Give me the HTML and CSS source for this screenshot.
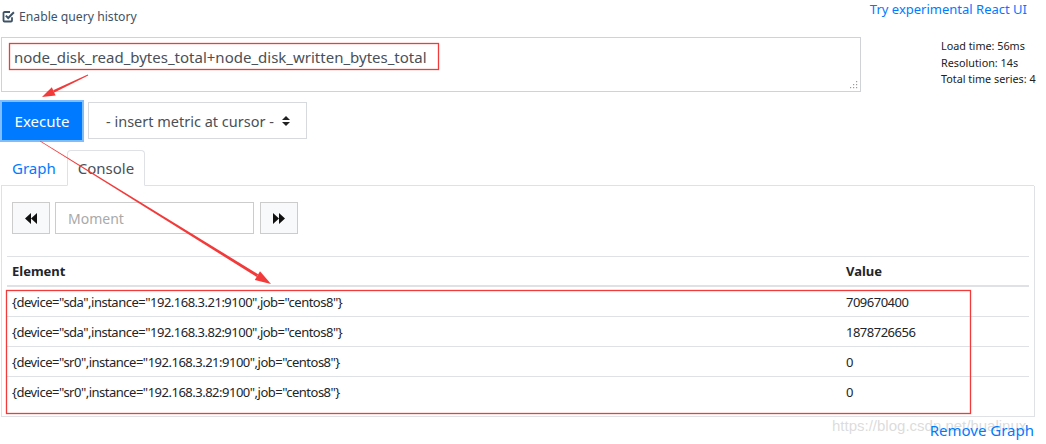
FILE: index.html
```html
<!DOCTYPE html>
<html lang="en">
<head>
  <meta charset="UTF-8">
  <title>Prometheus Time Series Collection and Processing Server</title>
  <link rel="stylesheet" href="styles.css">
</head>
<body>
<div class="page">
  <div class="topbar">
    <label class="history">
      <svg width="13" height="13" viewBox="0 0 13 13"><path d="M10 7.2v3.3a1 1 0 0 1-1 1H2.5a1 1 0 0 1-1-1V3a1 1 0 0 1 1-1H8" fill="none" stroke="#3e5366" stroke-width="1.8"/><path d="M3.8 5.6l2.4 2.4L11.9 2.3" fill="none" stroke="#3e5366" stroke-width="2"/></svg>
      Enable query history
    </label>
    <a class="react-link" href="#">Try experimental React UI</a>
  </div>

  <div class="query-row">
    <div class="expr">
      node_disk_read_bytes_total+node_disk_written_bytes_total
      <svg class="grip" width="8" height="8" viewBox="0 0 8 8" fill="#9a9a9a"><rect x="6" y="0" width="1.2" height="1.2"/><rect x="3" y="3" width="1.2" height="1.2"/><rect x="6" y="3" width="1.2" height="1.2"/><rect x="0" y="6" width="1.2" height="1.2"/><rect x="3" y="6" width="1.2" height="1.2"/><rect x="6" y="6" width="1.2" height="1.2"/></svg>
    </div>
    <div class="stats">
      Load time: 56ms<br>
      Resolution: 14s<br>
      Total time series: 4
    </div>
  </div>

  <div class="exec-row">
    <button class="btn-exec">Execute</button>
    <div class="metric-select">
      - insert metric at cursor -
      <svg width="8" height="12" viewBox="0 0 8 12" fill="#222"><path d="M0 5 L4 1 L8 5Z M0 7 L4 11 L8 7Z"/></svg>
    </div>
  </div>

  <ul class="tabs">
    <li><a href="#">Graph</a></li>
    <li class="active"><a href="#">Console</a></li>
  </ul>

  <div class="panel">
    <div class="time-nav">
      <button class="btn-step"><svg width="12" height="11" viewBox="0 0 12 11" fill="#111"><path d="M0 5.5 L6 0 V11Z M6 5.5 L12 0 V11Z"/></svg></button>
      <input class="moment" type="text" placeholder="Moment">
      <button class="btn-step"><svg width="12" height="11" viewBox="0 0 12 11" fill="#111"><path d="M12 5.5 L6 0 V11Z M6 5.5 L0 0 V11Z"/></svg></button>
    </div>

    <table class="console">
      <thead>
        <tr><th class="col-el">Element</th><th>Value</th></tr>
      </thead>
      <tbody>
        <tr><td>{device="sda",instance="192.168.3.21:9100",job="centos8"}</td><td>709670400</td></tr>
        <tr><td>{device="sda",instance="192.168.3.82:9100",job="centos8"}</td><td>1878726656</td></tr>
        <tr><td>{device="sr0",instance="192.168.3.21:9100",job="centos8"}</td><td>0</td></tr>
        <tr><td>{device="sr0",instance="192.168.3.82:9100",job="centos8"}</td><td>0</td></tr>
      </tbody>
    </table>
  </div>

  <div class="watermark">https://blog.csdn.net/hualinux</div>
  <div class="footer"><a href="#">Remove Graph</a></div>

  <!-- red annotations drawn over the screenshot -->
  <svg class="annot" width="1046" height="444" viewBox="0 0 1046 444">
    <rect x="9.5" y="43.5" width="429" height="26" fill="none" stroke="#f23a3a" stroke-width="1.3"/>
    <rect x="6.5" y="290.5" width="964" height="123" fill="none" stroke="#f23a3a" stroke-width="1.3"/>
    <polygon fill="#f23a3a" points="87.8,74.6 88.2,75.4 54.3,92.6 53.1,90.2"/>
    <polygon fill="#f23a3a" points="42,97 51.8,87.3 55.6,95.5"/>
    <polygon fill="#f23a3a" points="39.8,141.3 40.2,140.7 258.2,274.3 256.6,276.9"/>
    <polygon fill="#f23a3a" points="271,284 254.8,279.9 260,271.3"/>
  </svg>
</div>
</body>
</html>
```

FILE: styles.css
```css
/* General */
body {
  margin: 0;
  font-family: "Noto Sans", "Open Sans", sans-serif;
  color: #212529;
  background: #fff;
}

a {
  color: #007bff;
  text-decoration: none;
}

.page {
  position: relative;
  width: 1046px;
  height: 444px;
  overflow: hidden;
}

/* Top bar */
.topbar {
  display: flex;
  justify-content: space-between;
  align-items: flex-start;
  height: 37px;
}

.history {
  display: flex;
  align-items: center;
  gap: 4px;
  margin: 8px 0 0 2px;
  height: 16px;
  font-size: 12.2px;
  color: #3e5366;
}

.react-link {
  margin-right: 19px;
  font-size: 13px;
  line-height: 18px;
}

/* Expression input */
.query-row {
  display: flex;
  align-items: flex-start;
}

.expr {
  position: relative;
  box-sizing: border-box;
  width: 860px;
  height: 55px;
  margin-left: 1px;
  padding: 7px 12px;
  border: 1px solid #cfd3d7;
  font-size: 15px;
  line-height: 24px;
  color: #495057;
}

.grip {
  position: absolute;
  right: 2px;
  bottom: 2px;
}

.stats {
  margin: 1px 0 0 80px;
  font-size: 10.8px;
  line-height: 16.5px;
  color: #222;
}

/* Execute row */
.exec-row {
  display: flex;
  gap: 6px;
  margin-top: 10px;
  padding-left: 2px;
}

.btn-exec {
  width: 80px;
  height: 38px;
  border: 1px solid #007bff;
  border-radius: 0;
  background: #007bff;
  color: #fff;
  font-family: inherit;
  font-size: 15px;
  box-shadow: 0 0 0 2px #80bdff;
}

.metric-select {
  display: flex;
  align-items: center;
  gap: 8px;
  box-sizing: border-box;
  width: 219px;
  height: 37px;
  padding-left: 17px;
  border: 1px solid #d6dadf;
  font-size: 14.5px;
  white-space: nowrap;
  color: #495057;
}

/* Tabs */
.tabs {
  display: flex;
  margin: 10px 0 0 1px;
  padding: 0;
  list-style: none;
  border-bottom: 1px solid #dee2e6;
  width: 1033px;
}

.tabs li {
  margin-bottom: -1px;
}

.tabs a {
  display: block;
  padding: 5px 10px;
  border: 1px solid transparent;
  border-radius: 4px 4px 0 0;
  font-size: 15px;
  line-height: 24px;
}

.tabs .active a {
  color: #495057;
  background: #fff;
  border-color: #dee2e6 #dee2e6 #fff;
}

/* Console panel */
.panel {
  box-sizing: border-box;
  width: 1034px;
  height: 231px;
  margin-left: 1px;
  padding: 16px 10px 10px;
  border: 1px solid #dee2e6;
  border-top: 0;
}

.time-nav {
  display: flex;
  align-items: center;
}

.btn-step {
  display: flex;
  align-items: center;
  justify-content: center;
  width: 38px;
  height: 32px;
  padding: 0;
  border: 1px solid #ccc;
  background: #f8f9fa;
}

.moment {
  box-sizing: border-box;
  width: 199px;
  height: 32px;
  margin: 0 6px 0 5px;
  padding: 0 12px;
  border: 1px solid #ccc;
  font-family: inherit;
  font-size: 14px;
}

.moment::placeholder {
  color: #a9a9a9;
}

.console {
  width: 1022px;
  margin: 22px 0 0 -5px;
  border-collapse: collapse;
  font-size: 13px;
}

.console th {
  padding: 4px 5px 3px;
  border-top: 1px solid #dee2e6;
  border-bottom: 2px solid #dee2e6;
  line-height: 21px;
  text-align: left;
}

.console .col-el {
  width: 824px;
}

.console td {
  padding: 5px 5px 4px;
  border-top: 1px solid #dee2e6;
  line-height: 20px;
  letter-spacing: -0.5px;
}

.console tbody tr:first-child td {
  border-top: 0;
}

/* Footer */
.footer {
  position: relative;
  padding-right: 12px;
  text-align: right;
  font-size: 15px;
  line-height: 26px;
}

.watermark {
  position: absolute;
  left: 832px;
  top: 417px;
  font-family: "Liberation Sans", sans-serif;
  font-size: 15px;
  color: rgba(190, 190, 190, 0.55);
}

.annot {
  position: absolute;
  top: 0;
  left: 0;
  pointer-events: none;
}
```
